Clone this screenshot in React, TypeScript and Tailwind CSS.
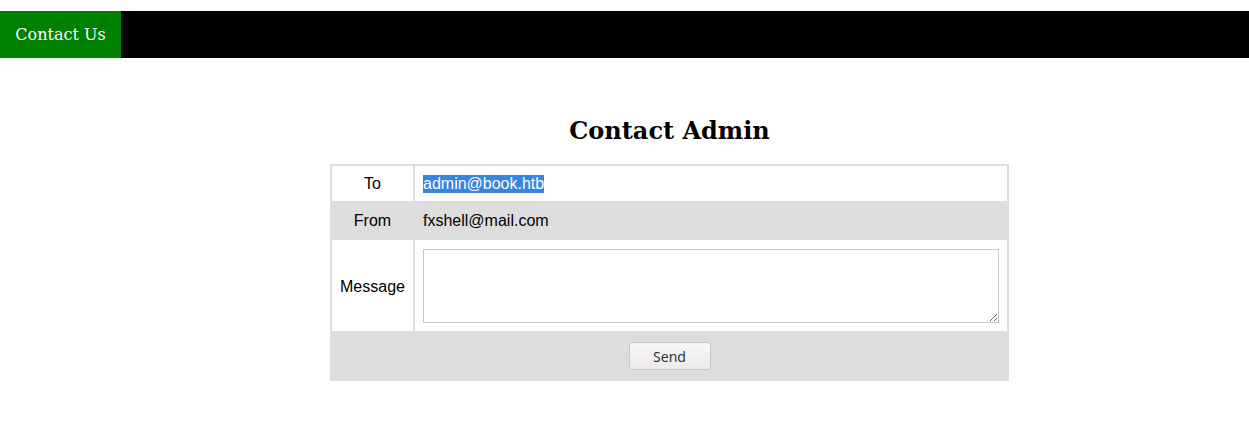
export default function App() {
  return (
    <div className="min-h-screen bg-white font-['Liberation_Sans',Arial,sans-serif] text-black">
      <nav className="mt-[11px] flex h-[47px] bg-black">
        <a className="flex h-full w-[121px] items-center justify-center bg-[#008000] font-['DejaVu_Serif',serif] text-[16px] text-white">
          Contact Us
        </a>
      </nav>

      <div className="ml-[330px] mt-[59px] w-[679px]">
        <h2 className="mb-[19px] text-center font-['DejaVu_Serif',serif] text-[24px] font-bold leading-[28px]">
          Contact Admin
        </h2>

        <div className="grid grid-cols-[81px_1fr] gap-[2px] bg-[#dddddd] p-[2px] text-[16px]">
          <div className="flex h-[35px] items-center justify-center bg-white">To</div>
          <div className="flex h-[35px] items-center bg-white px-2">
            <span className="bg-[#3584e4] leading-[18px] text-white">admin@book.htb</span>
          </div>

          <div className="flex h-[35px] items-center justify-center bg-[#dddddd]">From</div>
          <div className="flex h-[35px] items-center bg-[#dddddd] px-2">fxshell@mail.com</div>

          <div className="flex items-center justify-center bg-white pt-[2px]">Message</div>
          <div className="bg-white px-2 pb-2 pt-[9px]">
            <textarea className="block h-[74px] w-full border border-[#cdc7c2] bg-white outline-none" />
          </div>

          <div className="col-span-2 flex h-[46px] items-center justify-center bg-[#dddddd]">
            <button className="h-[28px] w-[82px] rounded-[3px] border border-[#cdc7c2] bg-gradient-to-b from-[#f8f7f6] to-[#edebe9] font-['Noto_Sans',sans-serif] text-[14px] text-[#2e3436]">
              Send
            </button>
          </div>
        </div>
      </div>
    </div>
  );
}
